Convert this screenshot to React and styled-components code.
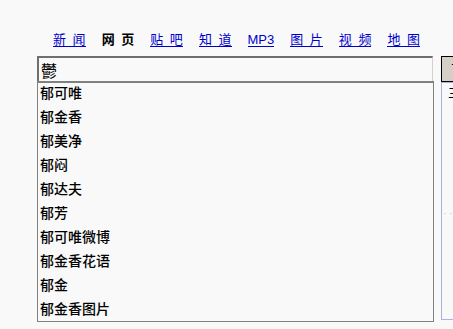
import React from 'react';
import styled, { createGlobalStyle } from 'styled-components';

const GlobalStyle = createGlobalStyle`
  html, body {
    margin: 0;
    padding: 0;
    background: #f8f9f8;
  }
  body {
    font-family: "Liberation Sans", "Noto Sans CJK SC", sans-serif;
  }
`;

const navItems = [
  { label: '新 闻' },
  { label: '网 页', current: true },
  { label: '贴 吧' },
  { label: '知 道' },
  { label: 'MP3' },
  { label: '图 片' },
  { label: '视 频' },
  { label: '地 图' },
];

const suggestions = [
  '郁可唯',
  '郁金香',
  '郁美净',
  '郁闷',
  '郁达夫',
  '郁芳',
  '郁可唯微博',
  '郁金香花语',
  '郁金',
  '郁金香图片',
];

const App = () => {
  return (
    <Page>
      <GlobalStyle />
      <Nav>
        {navItems.map((item) =>
          item.current ? (
            <Current key={item.label}>{item.label}</Current>
          ) : (
            <NavLink key={item.label} href="#">{item.label}</NavLink>
          )
        )}
      </Nav>
      <SearchRow>
        <Field>
          <Input defaultValue="鬱" />
          <Suggest>
            {suggestions.map((s) => (
              <SuggestItem key={s}>{s}</SuggestItem>
            ))}
          </Suggest>
        </Field>
        <Side>
          <SubmitButton type="button">百度一下</SubmitButton>
          <SidePanel>
            <SideText>三</SideText>
            <Dots>· · ·</Dots>
          </SidePanel>
        </Side>
      </SearchRow>
    </Page>
  );
};

const Page = styled.div`
  width: 453px;
  height: 329px;
  overflow: hidden;
  box-sizing: border-box;
  padding: 32px 0 0 37px;
`;

const Nav = styled.nav`
  display: flex;
  gap: 16px;
  width: 397px;
  padding-left: 16px;
  box-sizing: border-box;
  height: 16px;
  font-size: 13px;
  line-height: 15px;
  white-space: nowrap;
  word-spacing: 3px;
`;

const NavLink = styled.a`
  display: inline-block;
  color: #0000cc;
  text-decoration: none;
  border-bottom: 1px solid #0000cc;
  height: 14px;
`;

const Current = styled.b`
  display: inline-block;
  color: #000;
  font-weight: bold;
`;

const SearchRow = styled.div`
  display: flex;
  gap: 7px;
  margin-top: 8px;
  align-items: flex-start;
`;

const Field = styled.div`
  display: flex;
  flex-direction: column;
  width: 397px;
  flex-shrink: 0;
`;

const Input = styled.input`
  box-sizing: border-box;
  width: 396px;
  height: 25px;
  margin: 0;
  padding: 0 0 0 2px;
  border-top: 2px solid #6f6f6f;
  border-left: 2px solid #6f6f6f;
  border-right: 1px solid #d4d0c8;
  border-bottom: 0;
  background: #f8f9f8;
  font-family: "Noto Sans CJK SC", sans-serif;
  font-size: 16px;
  color: #000;
  outline: none;
`;

const Suggest = styled.ul`
  list-style: none;
  margin: 0;
  padding: 0;
  box-sizing: border-box;
  width: 397px;
  height: 241px;
  border: 1px solid #808080;
  border-top-width: 2px;
  background: #f8f9f8;
`;

const SuggestItem = styled.li`
  height: 24px;
  line-height: 18px;
  padding-left: 2px;
  font-family: "Noto Sans CJK SC", sans-serif;
  font-size: 14px;
  font-weight: 500;
  color: #000;
`;

const Side = styled.div`
  display: flex;
  flex-direction: column;
  flex-shrink: 0;
  width: 100px;
`;

const SubmitButton = styled.button`
  box-sizing: border-box;
  height: 26px;
  width: 100px;
  margin: 0;
  padding: 0 0 0 9px;
  text-align: left;
  background: #d4d0c8;
  border: 1px solid #000;
  border-right-color: #404040;
  font-family: "Noto Sans CJK SC", sans-serif;
  font-size: 14px;
  color: #000;
`;

const SidePanel = styled.div`
  box-sizing: border-box;
  height: 238px;
  border: 1px solid #a9b1df;
  padding: 3px 0 0 6px;
  display: flex;
  flex-direction: column;
  justify-content: space-between;
`;

const SideText = styled.span`
  font-family: "Noto Sans CJK SC", sans-serif;
  font-size: 12px;
  line-height: 14px;
  color: #000;
`;

const Dots = styled.span`
  font-size: 10px;
  color: #c8c8c8;
  margin-bottom: 100px;
  margin-left: -5px;
`;

export default App;
